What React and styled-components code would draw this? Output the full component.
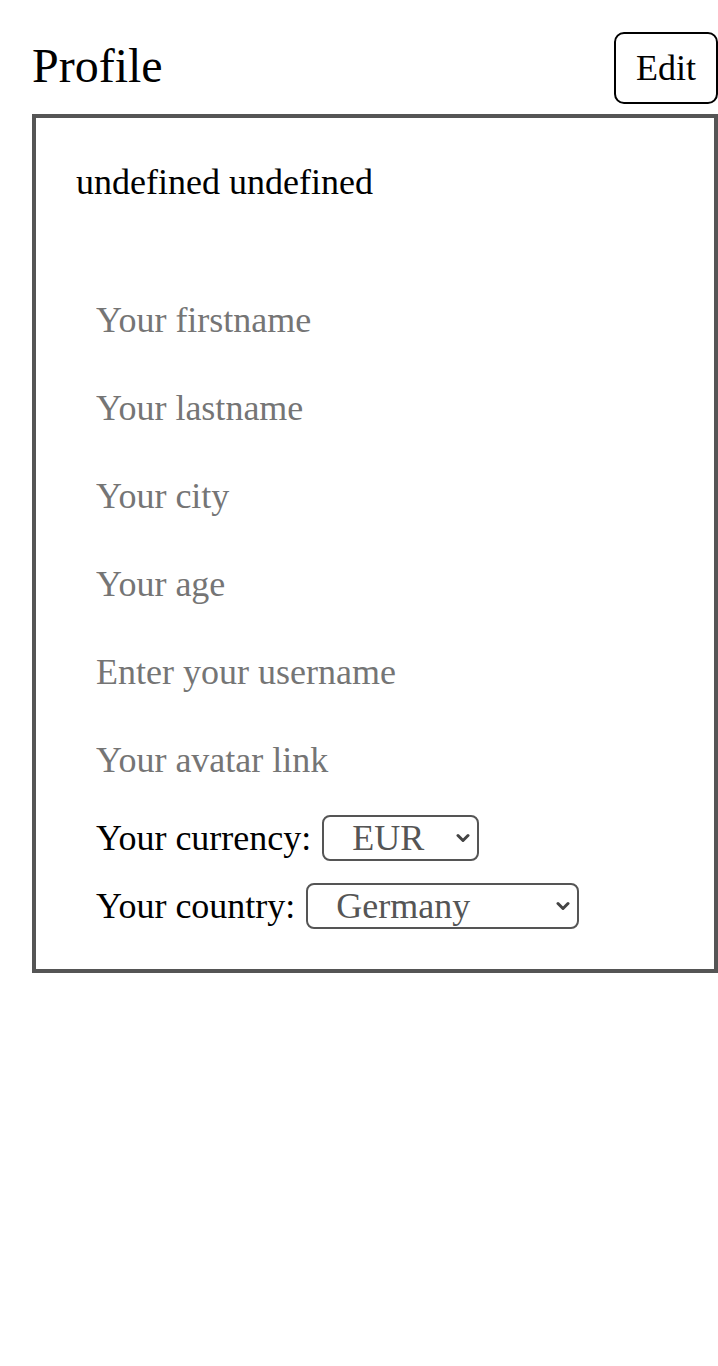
import React from "react";
import styled, { createGlobalStyle } from "styled-components";

const GlobalStyle = createGlobalStyle`
  body {
    margin: 0;
    background-color: #ffffff;
    font-family: "Liberation Serif", "Times New Roman", serif;
  }
`;

function Chevron() {
  return (
    <Arrow width="14" height="10" viewBox="0 0 14 10">
      <path d="M2 2.5 L7 7.5 L12 2.5" fill="none" stroke="#444" strokeWidth="3" strokeLinecap="round" strokeLinejoin="round" />
    </Arrow>
  );
}

function App() {
  return (
    <Wrapper>
      <GlobalStyle />
      <Header>
        <Title>Profile</Title>
        <EditButton>Edit</EditButton>
      </Header>
      <Card>
        <FullName>undefined undefined</FullName>
        <Field placeholder="Your firstname" />
        <Field placeholder="Your lastname" />
        <Field placeholder="Your city" />
        <Field placeholder="Your age" />
        <Field placeholder="Enter your username" />
        <Field placeholder="Your avatar link" />
        <SelectRow>
          <label>Your currency:</label>
          <SelectBox $width={157}>
            <Select defaultValue="EUR">
              <option value="EUR">EUR</option>
              <option value="USD">USD</option>
              <option value="RUB">RUB</option>
            </Select>
            <Chevron />
          </SelectBox>
        </SelectRow>
        <SelectRow>
          <label>Your country:</label>
          <SelectBox $width={273}>
            <Select defaultValue="Germany">
              <option value="Germany">Germany</option>
              <option value="Russia">Russia</option>
              <option value="Kazakhstan">Kazakhstan</option>
            </Select>
            <Chevron />
          </SelectBox>
        </SelectRow>
      </Card>
    </Wrapper>
  );
}

const Wrapper = styled.div`
  padding: 32px 0 0 32px;
  min-height: 100vh;
  box-sizing: border-box;
`;

const Header = styled.header`
  display: flex;
  justify-content: space-between;
  align-items: center;
  height: 72px;
  margin-bottom: 10px;
`;

const Title = styled.h1`
  margin: 0 0 6px;
  font-size: 48px;
  font-weight: 400;
  color: #000;
`;

const EditButton = styled.button`
  height: 72px;
  padding: 0 20px;
  font-family: "Liberation Serif", serif;
  font-size: 36px;
  color: #000;
  background: #fff;
  border: 2px solid #000;
  border-radius: 10px;
  cursor: pointer;
`;

const Card = styled.section`
  border: 4px solid #555555;
  padding: 40px;
  display: flex;
  flex-direction: column;
`;

const FullName = styled.div`
  font-size: 36px;
  line-height: 41px;
  margin-top: 4px;
  margin-bottom: 73px;
`;

const Field = styled.input`
  height: 88px;
  box-sizing: border-box;
  padding: 0 20px;
  border: none;
  outline: none;
  font-family: "Liberation Serif", serif;
  font-size: 36px;
  color: #000;
  &::placeholder {
    color: #757575;
  }
`;

const SelectRow = styled.div`
  display: flex;
  align-items: center;
  gap: 11px;
  padding-left: 20px;
  height: 46px;
  margin-top: 11px;
  font-size: 36px;
  & + & {
    margin-top: 22px;
  }
`;

const SelectBox = styled.div`
  position: relative;
  width: ${(p) => p.$width}px;
  height: 46px;
`;

const Select = styled.select`
  appearance: none;
  width: 100%;
  height: 100%;
  box-sizing: border-box;
  padding: 0 30px 0 28px;
  font-family: "Liberation Serif", serif;
  font-size: 36px;
  color: #555555;
  background: #fff;
  border: 2px solid #555555;
  border-radius: 8px;
`;

const Arrow = styled.svg`
  position: absolute;
  right: 9px;
  top: 18px;
  pointer-events: none;
`;

export default App;
